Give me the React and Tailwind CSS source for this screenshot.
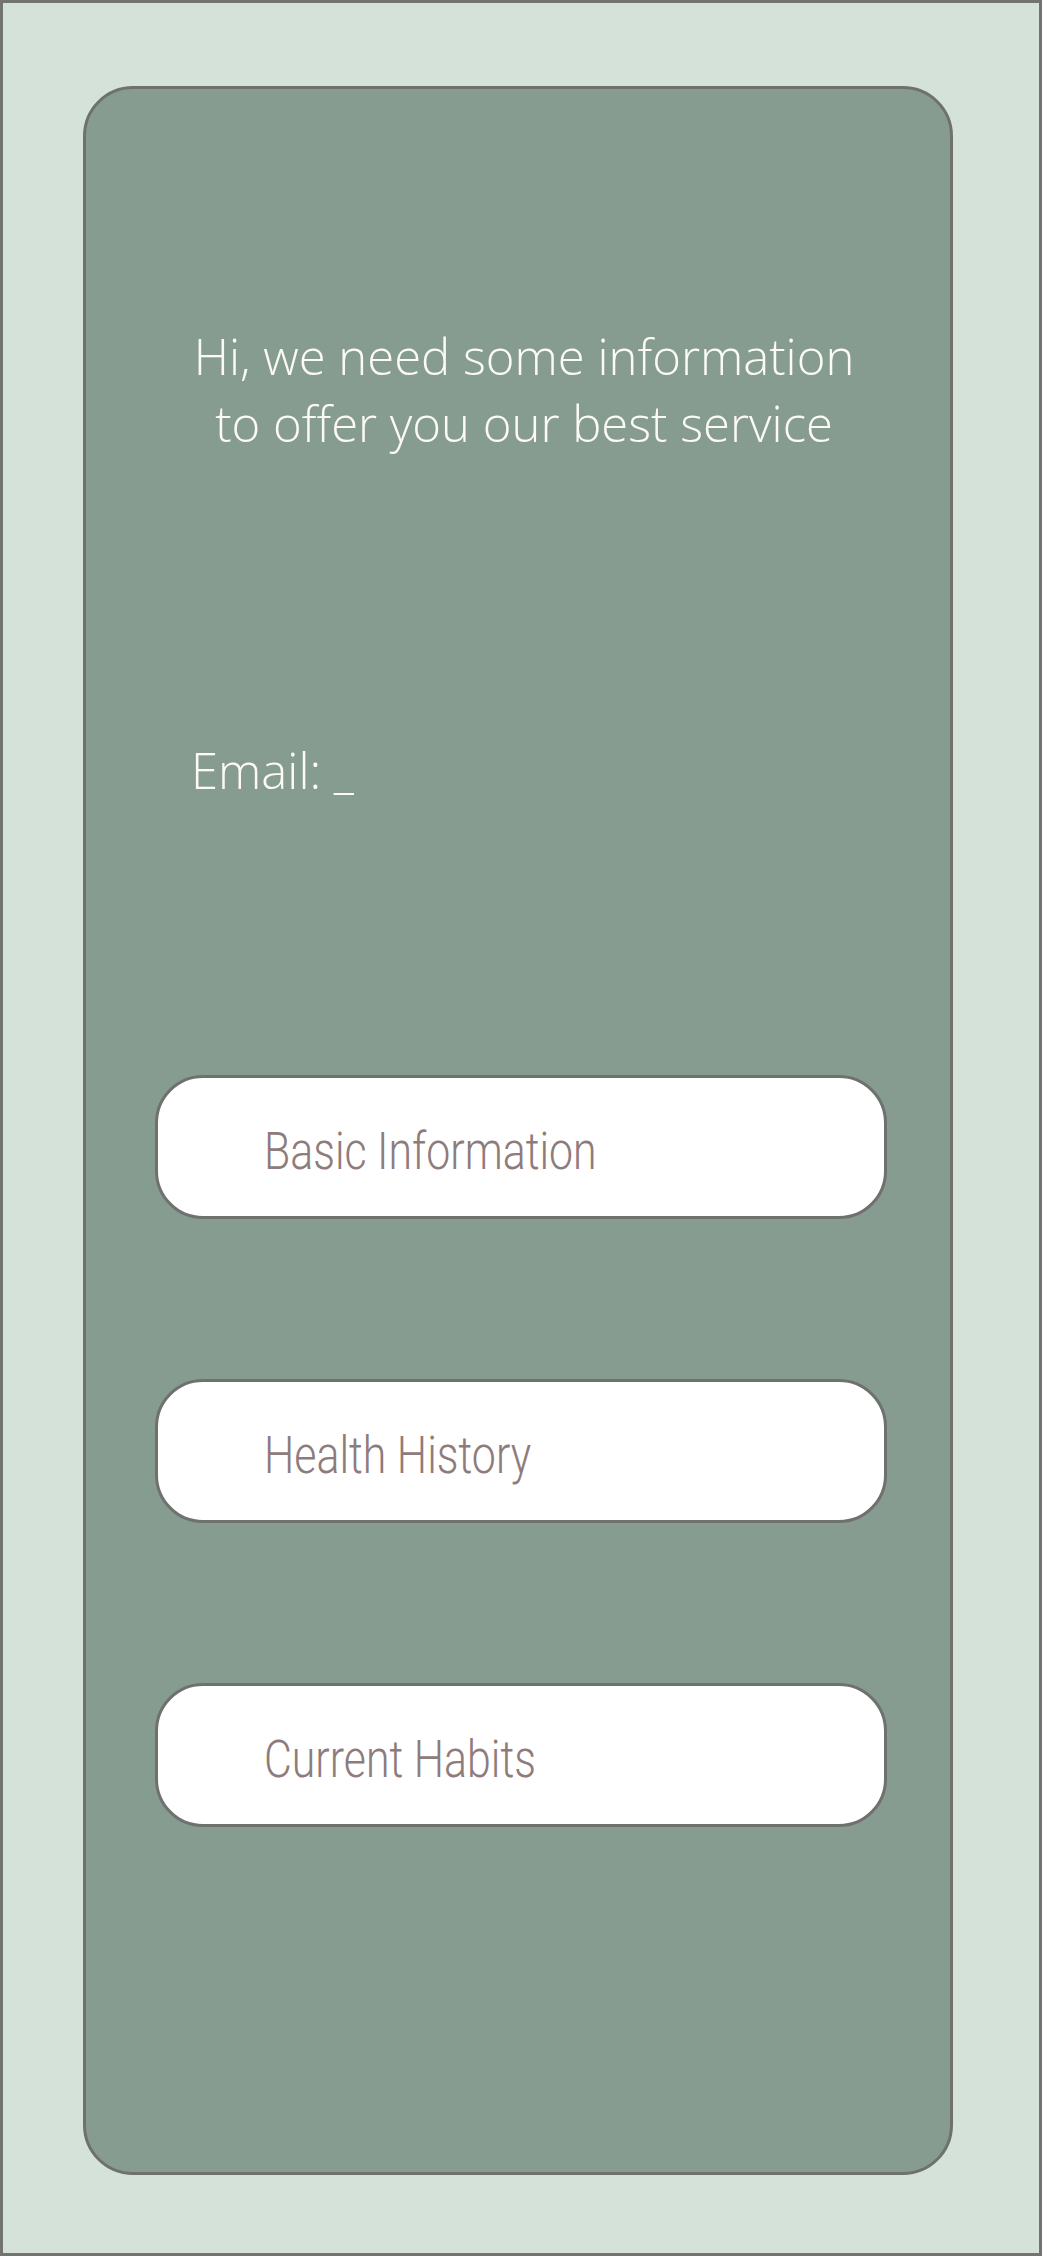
import React from "react";

const items = ["Basic Information", "Health History", "Current Habits"];

export default function App() {
  return (
    <div className="w-[1042px] h-[2256px] border-[3px] border-[#717470] bg-[#d5e2d9] box-border overflow-hidden">
      <div className="ml-[80px] mt-[83px] w-[870px] h-[2089px] box-border rounded-[50px] border-[3px] border-[#6e716d] bg-[#879c90] flex flex-col">
        <h1
          className="mt-[234px] pl-[12px] text-center text-[49px] leading-[67px] font-[350] text-[#fbfbf4]"
          style={{ fontFamily: '"Open Sans", sans-serif' }}
        >
          Hi, we need some information
          <br />
          to offer you our best service
        </h1>
        <p
          className="mt-[280px] ml-[105px] text-[49px] leading-[67px] font-[350] text-[#fbfbf4]"
          style={{ fontFamily: '"Open Sans", sans-serif' }}
        >
          Email: _
        </p>
        <div className="mt-[271px] ml-[69px] w-[732px] flex flex-col gap-[160px]">
          {items.map((t) => (
            <button
              key={t}
              className="h-[144px] w-full box-border rounded-[48px] border-[3px] border-[#6f716e] bg-white flex items-center pl-[106px] pt-[8px] text-left"
            >
              <span
                className="inline-block origin-left scale-x-[0.84] whitespace-nowrap text-[51px] leading-none font-light text-[#8e7b7b]"
                style={{ fontFamily: 'Roboto, sans-serif' }}
              >
                {t}
              </span>
            </button>
          ))}
        </div>
      </div>
    </div>
  );
}
